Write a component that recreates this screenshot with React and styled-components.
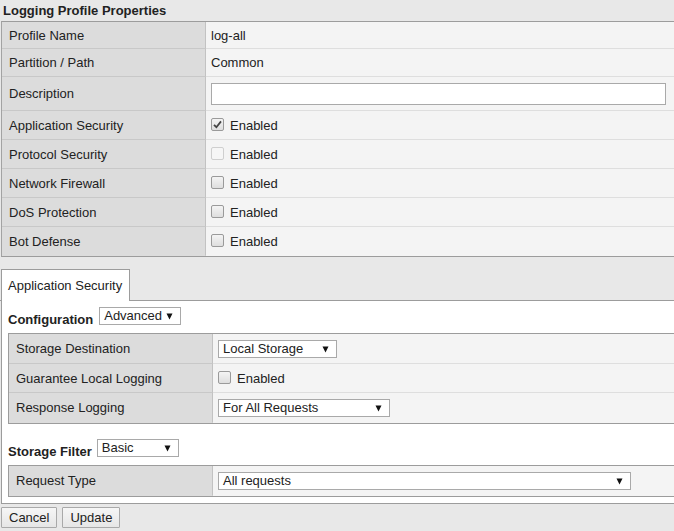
import styled, { createGlobalStyle } from "styled-components";

const GlobalStyle = createGlobalStyle`
  html, body {
    margin: 0;
    padding: 0;
    background: #e8e8e8;
  }
  body {
    font-family: "Liberation Sans", Arial, sans-serif;
    color: #222;
  }
`;

const Page = styled.div`
  width: 674px;
  height: 531px;
  overflow: hidden;
  display: flex;
  flex-direction: column;
`;

const Title = styled.h1`
  margin: 0;
  height: 21px;
  line-height: 21px;
  padding-left: 3px;
  font-size: 13px;
  font-weight: bold;
  color: #222;
`;

const PropsBox = styled.div`
  margin-left: 1px;
  border-top: 1px solid #9c9c9c;
  border-bottom: 1px solid #9c9c9c;
  border-left: 1px solid #a3a3a3;
`;

const Row = styled.div`
  display: grid;
  grid-template-columns: ${(p) => p.$labelWidth || 204}px 1fr;
  height: ${(p) => p.$h}px;
`;

const Label = styled.div`
  display: flex;
  align-items: center;
  padding-left: 7px;
  background: #dcdcdc;
  border-right: 1px solid #c2c2c2;
  border-bottom: 1px solid ${(p) => (p.$last ? "transparent" : "#c8c8c8")};
  font-size: 13px;
  color: #222;
`;

const Value = styled.div`
  display: flex;
  align-items: center;
  gap: 6px;
  padding-left: 5px;
  background: #f4f4f4;
  border-bottom: 1px solid ${(p) => (p.$last ? "transparent" : "#dedede")};
  font-size: 13px;
  color: #222;
`;

const TextInput = styled.div`
  width: 453px;
  height: 20px;
  background: #fff;
  border: 1px solid #a9a9a9;
`;

const Box = styled.span`
  width: 11px;
  height: 11px;
  border: 1px solid ${(p) => (p.$disabled ? "#cfcfcf" : "#9a9a9a")};
  border-radius: 2px;
  background: ${(p) =>
    p.$disabled ? "#f6f6f6" : "linear-gradient(#f4f4f4, #dedede)"};
  display: inline-flex;
  align-items: center;
  justify-content: center;
  margin-top: -2px;
`;

const CheckLabel = styled.span`
  margin-top: 1px;
`;

const Checkbox = ({ checked, disabled }) => (
  <>
    <Box $disabled={disabled}>
      {checked && (
        <svg width="9" height="9" viewBox="0 0 9 9">
          <path d="M1 4.8 L3.4 7.2 L8 1.4" stroke="#444" strokeWidth="1.8" fill="none" />
        </svg>
      )}
    </Box>
    <CheckLabel>Enabled</CheckLabel>
  </>
);

const TabStrip = styled.div`
  display: flex;
  align-items: flex-end;
  padding-top: 12px;
  border-bottom: 1px solid #9c9c9c;
`;

const Tab = styled.div`
  margin-left: 1px;
  margin-bottom: -1px;
  width: 121px;
  height: 31px;
  padding-left: 6px;
  display: flex;
  align-items: center;
  background: #fff;
  border: 1px solid #9c9c9c;
  border-bottom: none;
  font-size: 13px;
  white-space: nowrap;
  color: #222;
`;

const Panel = styled.div`
  margin-left: 1px;
  background: #fff;
  border-left: 1px solid #9c9c9c;
  border-bottom: 1px solid #9c9c9c;
  padding: 6px 0 6px 6px;
  display: flex;
  flex-direction: column;
`;

const SectionHead = styled.div`
  display: flex;
  align-items: flex-end;
  gap: ${(p) => p.$gap}px;
  margin-top: ${(p) => p.$top || 0}px;
`;

const SectionTitle = styled.span`
  font-size: 13px;
  font-weight: bold;
  line-height: 13px;
  margin-bottom: -1px;
  color: #222;
`;

const SelectBox = styled.div`
  position: relative;
  width: ${(p) => p.$w}px;
  height: 16px;
  background: #fff;
  border: 1px solid #a9a9a9;
  font-size: 13px;
  line-height: 16px;
  padding-left: 4px;
  box-sizing: content-box;
  color: #222;
`;

const Arrow = styled.svg`
  position: absolute;
  right: 7px;
  top: 5px;
`;

const Select = ({ w, children }) => (
  <SelectBox $w={w - 6}>
    {children}
    <Arrow width="7" height="7" viewBox="0 0 7 7">
      <path d="M0.5 0.5 H6.5 L3.5 6.5 Z" fill="#111" />
    </Arrow>
  </SelectBox>
);

const InnerTable = styled.div`
  margin-top: 8px;
  width: 680px;
  border: 1px solid #9c9c9c;
`;

const Buttons = styled.div`
  display: flex;
  gap: 5px;
  padding: 3px 0 0 1px;
`;

const Button = styled.button`
  height: 21px;
  padding: 0 7px;
  font-family: "Liberation Sans", Arial, sans-serif;
  font-size: 13px;
  color: #222;
  background: linear-gradient(#f6f6f6, #e6e6e6);
  border: 1px solid #a9a9a9;
  border-radius: 1px;
`;

const props = [
  { label: "Profile Name", h: 27, value: "log-all" },
  { label: "Partition / Path", h: 28, value: "Common" },
  { label: "Description", h: 34, input: true },
  { label: "Application Security", h: 29, check: true, checked: true },
  { label: "Protocol Security", h: 29, check: true, disabled: true },
  { label: "Network Firewall", h: 29, check: true },
  { label: "DoS Protection", h: 29, check: true },
  { label: "Bot Defense", h: 29, check: true },
];

const App = () => {
  return (
    <Page>
      <GlobalStyle />
      <Title>Logging Profile Properties</Title>
      <PropsBox>
        {props.map((p, i) => {
          const last = i === props.length - 1;
          return (
            <Row key={p.label} $h={p.h}>
              <Label $last={last}>{p.label}</Label>
              <Value $last={last}>
                {p.value}
                {p.input && <TextInput />}
                {p.check && <Checkbox checked={p.checked} disabled={p.disabled} />}
              </Value>
            </Row>
          );
        })}
      </PropsBox>

      <TabStrip>
        <Tab>Application Security</Tab>
      </TabStrip>
      <Panel>
        <SectionHead $gap={6}>
          <SectionTitle>Configuration</SectionTitle>
          <Select w={82}>Advanced</Select>
        </SectionHead>
        <InnerTable>
          <Row $h={30}>
            <Label>Storage Destination</Label>
            <Value>
              <Select w={119}>Local Storage</Select>
            </Value>
          </Row>
          <Row $h={29}>
            <Label>Guarantee Local Logging</Label>
            <Value>
              <Checkbox />
            </Value>
          </Row>
          <Row $h={30}>
            <Label $last>Response Logging</Label>
            <Value $last>
              <Select w={172}>For All Requests</Select>
            </Value>
          </Row>
        </InnerTable>

        <SectionHead $gap={5} $top={15}>
          <SectionTitle>Storage Filter</SectionTitle>
          <Select w={82}>Basic</Select>
        </SectionHead>
        <InnerTable>
          <Row $h={30}>
            <Label $last>Request Type</Label>
            <Value $last>
              <Select w={413}>All requests</Select>
            </Value>
          </Row>
        </InnerTable>
      </Panel>

      <Buttons>
        <Button>Cancel</Button>
        <Button>Update</Button>
      </Buttons>
    </Page>
  );
};

export default App;
